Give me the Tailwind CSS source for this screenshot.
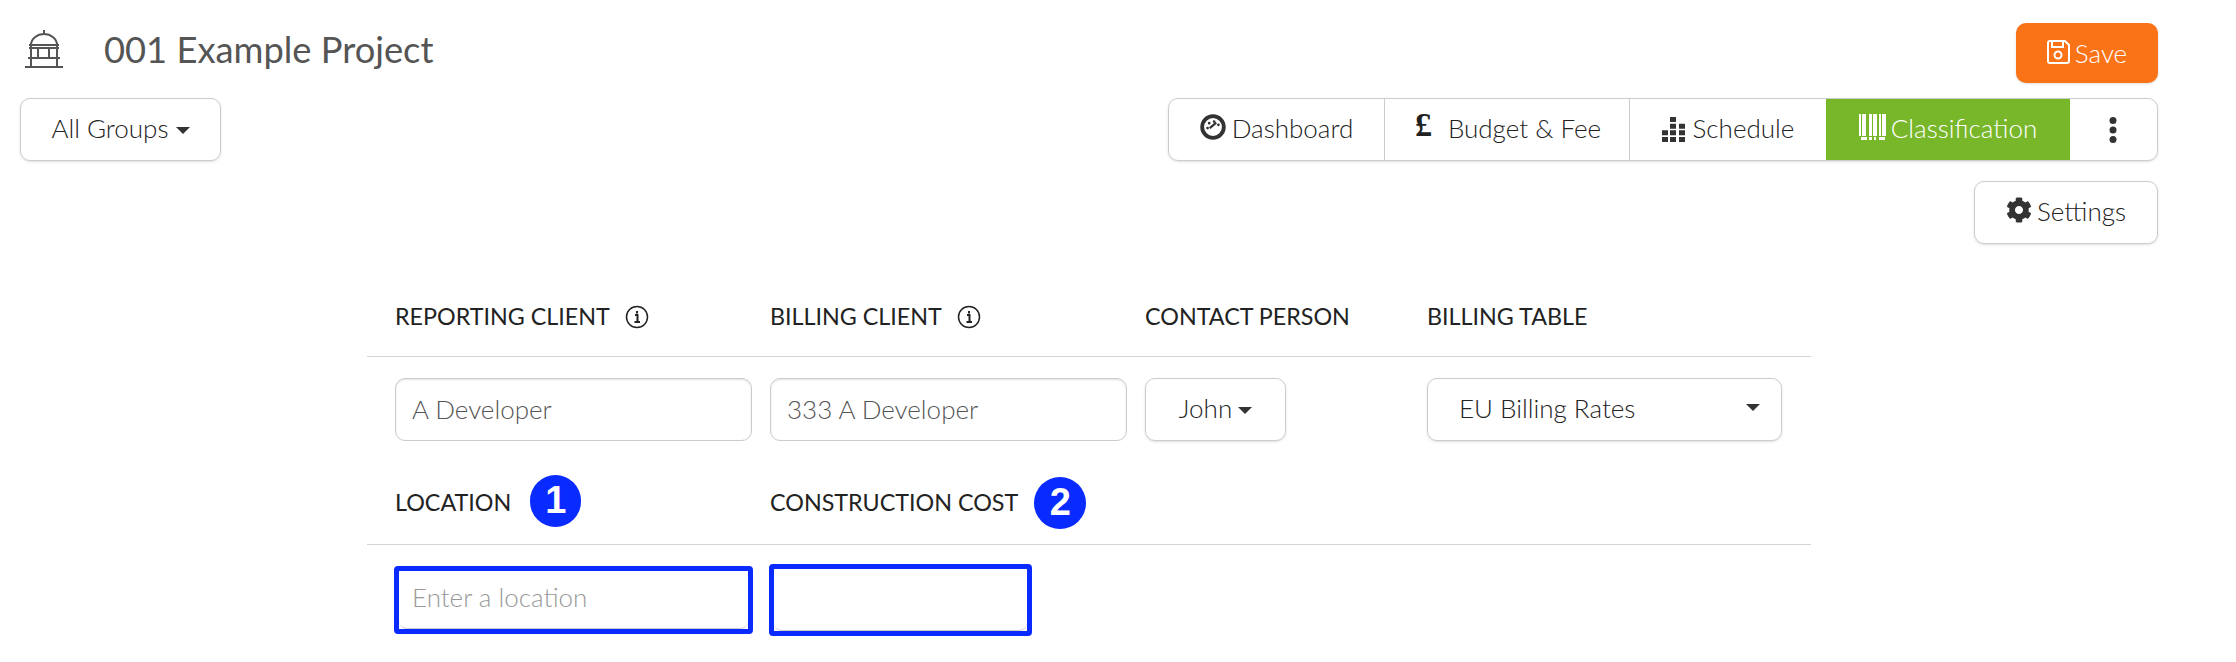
<!DOCTYPE html>
<html lang="en">
  <head>
    <meta charset="UTF-8" />
    <title>001 Example Project</title>
    <script src="https://cdn.jsdelivr.net/npm/@tailwindcss/browser@4"></script>
  </head>
  <body class="bg-white text-[#222] font-['Lato',sans-serif] overflow-hidden">
    <div class="pt-[23px] pl-[20px] pr-[78px]">
      <!-- title row -->
      <div class="flex items-start justify-between h-[60px]">
        <div class="flex items-center h-[54px]">
          <svg class="w-[38px] h-[38px] ml-[5px] mt-[-2px]" viewBox="0 0 38 38" fill="none" stroke="#555" stroke-width="2">
            <path d="M19 0v4M6 15c0-6 6-11 13-11s13 5 13 11" />
            <path d="M4 15h30M4 18h30M6 15v13M13 18v10M24 18v10M32 15v13M3 28h32M6 28v9M32 28v9" />
            <path d="M0 37h38" />
          </svg>
          <h1 class="ml-[41px] text-[36.300px] text-[#555] leading-none font-normal mt-[-2px]">001 Example Project</h1>
        </div>
        <button class="flex items-center justify-center w-[142px] h-[60px] bg-[#fb7317] text-white text-[26px] font-light rounded-[10px] shadow-sm">
          <svg class="w-[23px] h-[24px] mr-[5px] mt-[-3px]" viewBox="0 0 23 24" fill="none" stroke="currentColor" stroke-width="2">
            <path d="M3 1h15l4 4v16a2 2 0 0 1-2 2H3a2 2 0 0 1-2-2V3a2 2 0 0 1 2-2z" />
            <path d="M5 1v6h11V1" />
            <circle cx="11" cy="15" r="3.500" />
          </svg>
          Save
        </button>
      </div>

      <!-- groups and tabs -->
      <div class="flex items-start justify-between mt-[15px]">
        <button class="flex items-center justify-center w-[201px] h-[63px] pb-[2px] border border-[#ccc] rounded-[10px] text-[26px] font-light shadow-sm">
          All Groups
          <span class="ml-[7px] mt-[4px] border-x-[7px] border-x-transparent border-t-[7px] border-t-[#333]"></span>
        </button>
        <div class="flex h-[63px] w-[990px] border border-[#ccc] rounded-[10px] text-[26px] font-light shadow-sm overflow-hidden">
          <div class="flex items-center justify-center w-[216px] pb-[2px] border-r border-[#ccc]">
            <svg class="w-[26px] h-[26px] mr-[6px] mt-[-3px]" viewBox="0 0 24 24" fill="none" stroke="#333">
              <circle cx="12" cy="12" r="10" stroke-width="3.500" />
              <path d="M7 13l.01 0M8.500 8.500l.01 0M13 7l.01 0M17 10l.01 0" stroke-width="2.500" stroke-linecap="round" />
              <path d="M9 13l6-5" stroke-width="2" />
            </svg>
            Dashboard
          </div>
          <div class="flex items-center justify-center w-[245px] pb-[2px] border-r border-[#ccc]">
            <span class="font-['Liberation_Serif',serif] font-bold text-[34px] leading-none mr-[16px] ml-[2px] mt-[-8px]">£</span>
            Budget &amp; Fee
          </div>
          <div class="flex items-center justify-center w-[196px] pb-[2px]">
            <svg class="w-[23px] h-[25px] mr-[8px] mt-[2px]" viewBox="0 0 23 25" fill="#333">
              <path d="M8 0h6v5H8zM8 6.700h6v5H8zM17 6.700h6v5h-6zM0 13.300h6v5H0zM8 13.300h6v5H8zM17 13.300h6v5h-6zM0 20h6v5H0zM8 20h6v5H8zM17 20h6v5h-6z" />
            </svg>
            Schedule
          </div>
          <div class="flex items-center justify-center w-[244px] pb-[2px] bg-[#78b72a] text-white">
            <svg class="w-[27px] h-[26px] mr-[5px] mt-[-4px]" viewBox="0 0 27 26" fill="#fff">
              <path d="M0 0h2v22H0zM3 0h4v22H3zM10 0h3v22h-3zM14 0h4v22h-4zM20 0h2v22h-2zM23 0h4v22h-4zM2 23h6v3H2zM10 23h3v3h-3zM15 23h2v3h-2zM20 23h6v3h-6z" />
            </svg>
            Classification
          </div>
          <div class="flex items-center justify-center flex-1 pr-[2px]">
            <svg class="w-[8px] h-[26px]" viewBox="0 0 8 26" fill="#333">
              <circle cx="4" cy="3.500" r="3.500" />
              <circle cx="4" cy="13" r="3.500" />
              <circle cx="4" cy="22.500" r="3.500" />
            </svg>
          </div>
        </div>
      </div>

      <!-- settings -->
      <div class="flex justify-end mt-[20px]">
        <button class="flex items-center justify-center w-[184px] h-[63px] pb-[2px] border border-[#ccc] rounded-[10px] text-[26px] font-light shadow-sm">
          <svg class="w-[26px] h-[26px] mr-[5px] mt-[-3px]" viewBox="0 0 512 512" fill="#333">
            <path d="M487.4 315.7l-42.6-24.6c4.3-23.2 4.3-47 0-70.2l42.6-24.6c4.9-2.8 7.1-8.6 5.5-14-11.1-35.6-30-67.8-54.7-94.6-3.800-4.100-10-5.100-14.800-2.300L380.800 110c-17.900-15.400-38.500-27.300-60.800-35.100V25.800c0-5.600-3.900-10.500-9.400-11.700-36.700-8.200-74.300-7.800-109.200 0-5.500 1.200-9.400 6.100-9.400 11.700V75c-22.200 7.900-42.800 19.800-60.800 35.100L88.700 85.500c-4.900-2.800-11-1.900-14.800 2.300-24.700 26.700-43.600 58.900-54.700 94.600-1.700 5.400.6 11.200 5.500 14L67.300 221c-4.300 23.200-4.300 47 0 70.200l-42.600 24.600c-4.900 2.800-7.100 8.600-5.500 14 11.100 35.600 30 67.800 54.700 94.600 3.800 4.100 10 5.100 14.800 2.300l42.600-24.600c17.900 15.400 38.500 27.300 60.800 35.100v49.200c0 5.600 3.900 10.500 9.400 11.700 36.700 8.200 74.300 7.800 109.200 0 5.500-1.200 9.400-6.100 9.400-11.700v-49.200c22.200-7.900 42.800-19.800 60.800-35.100l42.600 24.600c4.900 2.800 11 1.900 14.800-2.300 24.700-26.700 43.600-58.900 54.700-94.600 1.500-5.500-.7-11.300-5.600-14.100zM256 336c-44.100 0-80-35.900-80-80s35.900-80 80-80 80 35.900 80 80-35.900 80-80 80z" />
          </svg>
          Settings
        </button>
      </div>
    </div>

    <!-- classification form -->
    <div class="ml-[367px] w-[1444px] mt-[33px] text-[23.300px] text-[#222]">
      <div class="grid grid-cols-[375px_375px_282px_1fr] h-[80px] pl-[28px] items-center border-b border-[#d4d4d4]">
        <div class="flex items-center">
          REPORTING CLIENT
          <svg class="w-[24px] h-[24px] ml-[15px]" viewBox="0 0 24 24" fill="none" stroke="#222" stroke-width="1.500"><circle cx="12" cy="12" r="10.500" /><path d="M10 10h2.500v7M9.500 17h5.500M12 6v2.500" stroke-width="2" /></svg>
        </div>
        <div class="flex items-center">
          BILLING CLIENT
          <svg class="w-[24px] h-[24px] ml-[15px]" viewBox="0 0 24 24" fill="none" stroke="#222" stroke-width="1.500"><circle cx="12" cy="12" r="10.500" /><path d="M10 10h2.500v7M9.500 17h5.500M12 6v2.500" stroke-width="2" /></svg>
        </div>
        <div>CONTACT PERSON</div>
        <div>BILLING TABLE</div>
      </div>

      <div class="grid grid-cols-[375px_375px_282px_1fr] pl-[28px] pt-[21px] text-[26px] font-light">
        <input value="A Developer" class="w-[357px] h-[63px] px-[16px] pb-[2px] border border-[#ccc] rounded-[10px] text-[#555] shadow-[inset_0_1px_2px_rgba(0,0,0,0.12)]" />
        <input value="333 A Developer" class="w-[357px] h-[63px] px-[16px] pb-[2px] border border-[#ccc] rounded-[10px] text-[#555] shadow-[inset_0_1px_2px_rgba(0,0,0,0.12)]" />
        <button class="flex items-center justify-center w-[141px] h-[63px] pb-[2px] border border-[#ccc] rounded-[10px] shadow-sm">
          John
          <span class="ml-[6px] mt-[4px] border-x-[7px] border-x-transparent border-t-[7px] border-t-[#333]"></span>
        </button>
        <div class="flex items-center justify-between w-[355px] h-[63px] pl-[31px] pr-[21px] pb-[2px] border border-[#ccc] rounded-[10px] shadow-sm">
          EU Billing Rates
          <span class="mt-[-3px] border-x-[7px] border-x-transparent border-t-[7px] border-t-[#333]"></span>
        </div>
      </div>

      <div class="grid grid-cols-[375px_375px_282px_1fr] h-[104px] pl-[28px] pt-[20px] items-center border-b border-[#d4d4d4]">
        <div class="flex items-center">
          LOCATION
          <span class="ml-[19px] mt-[-4px] flex items-center justify-center w-[51px] h-[52px] rounded-full bg-[#0a2bff] text-white text-[38px] font-bold font-['Liberation_Sans',sans-serif]">1</span>
        </div>
        <div class="flex items-center">
          CONSTRUCTION COST
          <span class="ml-[16px] flex items-center justify-center w-[52px] h-[52px] rounded-full bg-[#0a2bff] text-white text-[38px] font-bold font-['Liberation_Sans',sans-serif]">2</span>
        </div>
      </div>

      <div class="grid grid-cols-[375px_375px] pl-[28px] pt-[19px] text-[26px] font-light">
        <div class="ml-[-1px] mt-[2px] w-[359px] h-[68px] border-[5px] border-[#0a2bff] rounded-[4px]">
          <input placeholder="Enter a location" class="w-full h-full px-[13px] pb-[6px] border-b border-[#ccc] rounded-b-[8px] placeholder:text-[#999]" />
        </div>
        <div class="ml-[-1px] w-[263px] h-[72px] border-[5px] border-[#0a2bff] rounded-[4px]">
          <input class="w-full h-full px-[13px] border-b border-[#ccc] rounded-b-[8px]" />
        </div>
      </div>
    </div>
  </body>
</html>
